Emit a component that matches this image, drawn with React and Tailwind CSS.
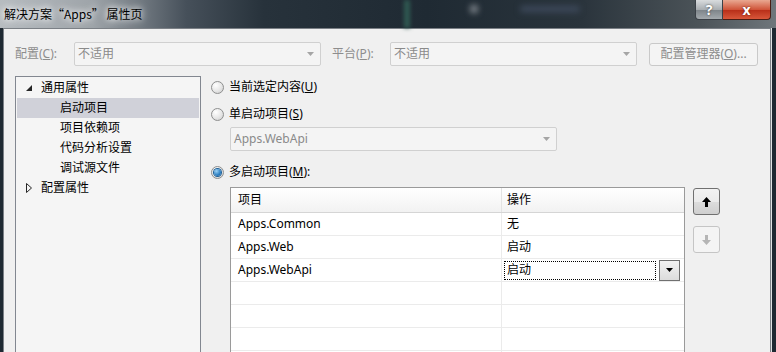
import { useState } from "react";

const FONT = "font-['Noto_Sans','Noto_Sans_CJK_SC',sans-serif]";

function Radio({ checked }) {
  return (
    <span className="flex h-[13px] w-[13px] items-center justify-center rounded-full border border-[#8e8f8f] bg-[radial-gradient(circle_at_35%_30%,#ffffff,#e6e6e6_55%,#c9c9c9)]">
      {checked && (
        <span className="h-[7px] w-[7px] rounded-full bg-[radial-gradient(circle_at_35%_30%,#9bd2f5,#2c7fc2_60%,#135c9a)] shadow-[0_0_0_1px_#1d5f96]" />
      )}
    </span>
  );
}

function Combo({ value, className }) {
  return (
    <div
      className={
        "flex h-[24px] shrink-0 items-center justify-between rounded-[2px] border border-[#d0d0d0] bg-[#f4f4f4] pl-[3px] pr-[6px] text-[#8a8a8a] " +
        className
      }
    >
      <span>{value}</span>
      <svg width="7" height="4" viewBox="0 0 7 4">
        <path d="M0 0h7L3.5 4z" fill="#a5a5a5" />
      </svg>
    </div>
  );
}

function Arrow({ down, color }) {
  return (
    <svg width="9" height="10" viewBox="0 0 9 10" className={down ? "rotate-180" : ""}>
      <path d="M4.5 0L9 5H6v5H3V5H0z" fill={color} />
    </svg>
  );
}

const treeItems = [
  { label: "通用属性", level: 0, expanded: true },
  { label: "启动项目", level: 1, selected: true },
  { label: "项目依赖项", level: 1 },
  { label: "代码分析设置", level: 1 },
  { label: "调试源文件", level: 1 },
  { label: "配置属性", level: 0, expanded: false },
];

const rows = [
  { project: "Apps.Common", action: "无" },
  { project: "Apps.Web", action: "启动" },
  { project: "Apps.WebApi", action: "启动", editing: true },
  {},
  {},
  {},
  {},
];

export default function App() {
  const [mode] = useState("multi");

  return (
    <div className={"flex h-[352px] w-[776px] flex-col overflow-hidden bg-[#1e2932] text-[12px] leading-none text-black " + FONT}>
      {/* Title bar */}
      <div className="relative flex h-[28px] shrink-0 items-start justify-between bg-[linear-gradient(90deg,#b7bcc0_0%,#9ea4a9_12%,#46505a_24%,#27323b_34%,#1f2a33_55%,#2a343c_75%,#4b5358_90%,#6f767b_100%)]">
        <div className="absolute left-[404px] top-0 h-full w-[6px] bg-[#2f5a52] blur-[2px]" />
        <div className="absolute left-[470px] top-[5px] h-[8px] w-[8px] rounded-full bg-[#8a9096] blur-[3px]" />
        <div className="absolute left-[520px] top-[6px] h-[6px] w-[60px] rounded bg-[#3e4a5c] blur-[3px]" />
        <span className="relative ml-[4px] mt-[8px] font-['Noto_Sans_CJK_SC',sans-serif] [text-shadow:0_0_6px_#ffffff,0_0_10px_#ffffff]">
          解决方案“Apps” 属性页
        </span>
        <div className="relative mr-[5px] flex">
          <div className="flex h-[20px] w-[28px] items-center justify-center rounded-bl-[4px] border border-t-0 border-[#3b4147] bg-[linear-gradient(180deg,#d9dcde,#a9aeb2_50%,#7f868b_55%,#a3a9ad)] text-[14px] font-bold text-white [text-shadow:0_0_2px_#333]">
            ?
          </div>
          <div className="flex h-[20px] w-[48px] items-center justify-center rounded-br-[4px] border border-l-0 border-t-0 border-[#4a1d14] bg-[linear-gradient(180deg,#e9a891,#d0553a_50%,#b9301a_55%,#d8573a)] text-[14px] font-bold text-white [text-shadow:0_0_2px_#5a1208]">
            x
          </div>
        </div>
      </div>

      {/* Window body */}
      <div className="flex min-h-0 flex-1 pl-[3px]">
        <div className="flex w-[768px] flex-col border-l border-r border-t border-[#7b8086] bg-[#f0f0f0] pt-[13px]">
          {/* Config row */}
          <div className="flex h-[24px] shrink-0 items-center pl-[11px]">
            <span className="w-[59px] text-[#8d8d8d]">
              配置(<u>C</u>):
            </span>
            <Combo value="不适用" className="w-[247px]" />
            <span className="ml-[11px] w-[58px] text-[#8d8d8d]">
              平台(<u>P</u>):
            </span>
            <Combo value="不适用" className="w-[247px]" />
            <div className="ml-[12px] flex h-[23px] w-[109px] items-center justify-center rounded-[3px] border border-[#c9c9c9] bg-[#f4f4f4] text-[#8d8d8d]">
              配置管理器(<u>O</u>)...
            </div>
          </div>

          {/* Main */}
          <div className="mt-[10px] flex items-start pl-[11px]">
            {/* Tree */}
            <div className="h-[300px] w-[186px] shrink-0 border border-[#828790] bg-[#f5f5f5] p-px">
              {treeItems.map((item) => (
                <div
                  key={item.label}
                  className={
                    "flex h-[20px] items-center " + (item.selected ? "bg-[#d0d1d9]" : "")
                  }
                >
                  {item.level === 0 ? (
                    <>
                      <span className="ml-[9px] flex w-[15px] items-center">
                        {item.expanded ? (
                          <svg width="6" height="6" viewBox="0 0 6 6">
                            <path d="M6 0V6H0z" fill="#262626" />
                          </svg>
                        ) : (
                          <svg width="6" height="10" viewBox="0 0 6 10">
                            <path d="M0.5 0.5L5.5 5L0.5 9.5z" fill="none" stroke="#262626" />
                          </svg>
                        )}
                      </span>
                      <span>{item.label}</span>
                    </>
                  ) : (
                    <span className="ml-[43px]">{item.label}</span>
                  )}
                </div>
              ))}
            </div>

            {/* Right */}
            <div className="ml-[10px] flex flex-1 flex-col">
              <div className="flex h-[22px] shrink-0 items-center gap-[5px]">
                <Radio checked={mode === "current"} />
                <span>
                  当前选定内容(<u>U</u>)
                </span>
              </div>
              <div className="mt-[5px] flex h-[22px] shrink-0 items-center gap-[5px]">
                <Radio checked={mode === "single"} />
                <span>
                  单启动项目(<u>S</u>)
                </span>
              </div>
              <Combo value="Apps.WebApi" className="ml-[19px] mt-[2px] w-[327px]" />
              <div className="mt-[10px] flex h-[22px] shrink-0 items-center gap-[5px]">
                <Radio checked={mode === "multi"} />
                <span>
                  多启动项目(<u>M</u>):
                </span>
              </div>

              <div className="ml-[19px] mt-[4px] flex shrink-0 items-start gap-[8px]">
                {/* Grid */}
                <div className="w-[455px] border border-[#9a9a9a] bg-white">
                  <div className="flex h-[25px] border-b border-[#d5d5d5] bg-[linear-gradient(180deg,#ffffff,#f2f2f2)]">
                    <div className="flex w-[271px] items-center border-r border-[#e3e3e3] pl-[7px]">项目</div>
                    <div className="flex flex-1 items-center pl-[5px]">操作</div>
                  </div>
                  {rows.map((r, i) => (
                    <div key={i} className="flex h-[23px] border-b border-[#ebebeb]">
                      <div className="flex w-[271px] items-center border-r border-[#ebebeb] pl-[7px]">
                        {r.project}
                      </div>
                      <div className="flex flex-1 items-center pl-[2px]">
                        {r.editing ? (
                          <>
                            <div className="flex h-[19px] w-[152px] items-center border border-dotted border-black pl-[2px]">
                              {r.action}
                            </div>
                            <div className="ml-[3px] flex h-[21px] w-[21px] items-center justify-center border border-[#707070] bg-[linear-gradient(180deg,#f2f2f2,#dcdcdc)]">
                              <svg width="7" height="4" viewBox="0 0 7 4">
                                <path d="M0 0h7L3.5 4z" fill="#000" />
                              </svg>
                            </div>
                          </>
                        ) : (
                          <span className="pl-[3px]">{r.action}</span>
                        )}
                      </div>
                    </div>
                  ))}
                </div>

                {/* Move buttons */}
                <div className="flex flex-col gap-[11px] pt-px">
                  <div className="flex h-[27px] w-[27px] items-center justify-center rounded-[3px] border border-[#707070] bg-[linear-gradient(180deg,#f2f2f2,#ebebeb_50%,#dddddd_50%,#cfcfcf)]">
                    <Arrow color="#000" />
                  </div>
                  <div className="flex h-[27px] w-[27px] items-center justify-center rounded-[3px] border border-[#c5c5c5] bg-[#f4f4f4]">
                    <Arrow down color="#b5b5b5" />
                  </div>
                </div>
              </div>
            </div>
          </div>
        </div>
        <div className="w-px bg-[#dfe2e4]" />
      </div>
    </div>
  );
}
